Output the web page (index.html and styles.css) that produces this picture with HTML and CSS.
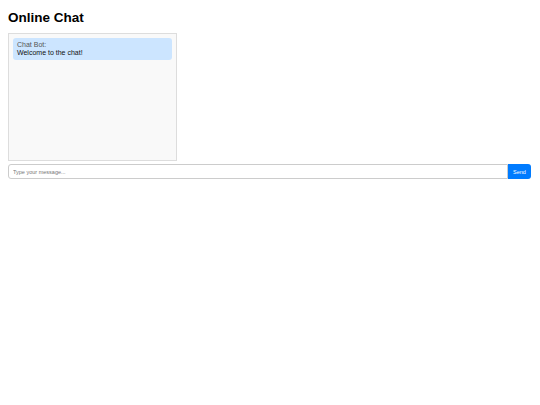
FILE: index.html
```html
<!DOCTYPE html>
<html>
<head>
<meta charset="utf-8">
<link rel="stylesheet" href="styles.css">
</head>
<body>
<h1 class="title">Online Chat</h1>
<div class="chat-box">
  <div class="message bot">
    <div class="sender">Chat Bot:</div>
    <div class="text">Welcome to the chat!</div>
  </div>
</div>
<div class="input-row">
  <input class="msg-input" type="text" placeholder="Type your message...">
  <button class="send-btn">Send</button>
</div>
</body>
</html>
```
FILE: styles.css
```css
html, body {
  margin: 0;
  padding: 0;
  background: #fff;
}
body {
  padding: 8px 9px 8px 8px;
  font-family: "Liberation Sans", Arial, sans-serif;
  color: #000;
}
.title {
  margin: 1px 0 7px 0;
  font-size: 13.5px;
  line-height: 17px;
  font-weight: bold;
}
.chat-box {
  width: 159px;
  height: 118px;
  border: 1px solid #ddd;
  background: #f9f9f9;
  padding: 4px;
  overflow: hidden;
}
.message {
  border-radius: 3px;
  padding: 3px 4px;
  font-size: 7px;
  line-height: 8px;
}
.message.bot {
  background: #cce5ff;
}
.sender {
  color: #555;
}
.text {
  color: #111;
}
.input-row {
  display: flex;
  margin-top: 3px;
  height: 15px;
}
.msg-input {
  flex: 1;
  margin: 0;
  border: 1px solid #ccc;
  border-radius: 3px 0 0 3px;
  padding: 0 4px;
  font-family: "Liberation Sans", Arial, sans-serif;
  font-size: 5.5px;
  outline: none;
  box-sizing: border-box;
  height: 15px;
}
.msg-input::placeholder {
  color: #777;
}
.send-btn {
  margin: 0;
  width: 23px;
  height: 15px;
  border: none;
  border-radius: 0 3px 3px 0;
  background: #007bff;
  color: #fff;
  font-family: "Liberation Sans", Arial, sans-serif;
  font-size: 5.5px;
  padding: 0;
}
```
